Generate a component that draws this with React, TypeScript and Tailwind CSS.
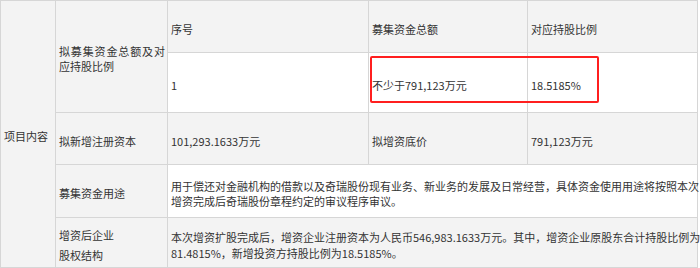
import React from "react";

const grey = "bg-[#f3f3f3]";
const white = "bg-white";

function Cell({
  children,
  className = "",
}: {
  children?: React.ReactNode;
  className?: string;
}) {
  return (
    <div className={`flex items-center pl-[3px] pr-[2px] pt-[5px] ${className}`}>
      <div className="w-full">{children}</div>
    </div>
  );
}

export default function App() {
  return (
    <div
      className="relative w-[700px] h-[268px] bg-white text-[11px] leading-[15px] text-[#333]"
      style={{ fontFamily: '"Noto Sans CJK SC", "Noto Sans", sans-serif' }}
    >
      <div className="grid w-[698px] grid-cols-[54px_111px_200px_158px_169px] grid-rows-[51px_59px_51px_52px_49px] gap-px bg-[#d6d6d6] p-px">
        <Cell className={`${grey} row-span-5 pl-[2px]`}>项目内容</Cell>
        <Cell className={`${grey} row-span-2`}>
          <div className="text-justify">拟募集资金总额及对应持股比例</div>
        </Cell>
        <Cell className={grey}>序号</Cell>
        <Cell className={grey}>募集资金总额</Cell>
        <Cell className={grey}>对应持股比例</Cell>

        <Cell className={white}>1</Cell>
        <Cell className={white}>不少于791,123万元</Cell>
        <Cell className={white}>18.5185%</Cell>

        <Cell className={grey}>拟新增注册资本</Cell>
        <Cell className={grey}>101,293.1633万元</Cell>
        <Cell className={grey}>拟增资底价</Cell>
        <Cell className={grey}>791,123万元</Cell>

        <Cell className={grey}>募集资金用途</Cell>
        <Cell className={`${white} col-span-3`}>
          <div className="whitespace-nowrap">
            用于偿还对金融机构的借款以及奇瑞股份现有业务、新业务的发展及日常经营，具体资金使用用途将按照本次
            <br />
            增资完成后奇瑞股份章程约定的审议程序审议。
          </div>
        </Cell>

        <Cell className={grey}>
          <div className="leading-[20px]">
            增资后企业
            <br />
            股权结构
          </div>
        </Cell>
        <Cell className={`${grey} col-span-3`}>
          <div className="whitespace-nowrap leading-[16px]">
            本次增资扩股完成后，增资企业注册资本为人民币546,983.1633万元。其中，增资企业原股东合计持股比例为
            <br />
            81.4815%，新增投资方持股比例为18.5185%。
          </div>
        </Cell>
      </div>

      {/* highlight frame around the amount and ratio */}
      <div className="pointer-events-none absolute left-[370px] top-[56px] h-[47px] w-[229px] rounded-[2px] border-2 border-[#ff1f1f]" />
    </div>
  );
}
